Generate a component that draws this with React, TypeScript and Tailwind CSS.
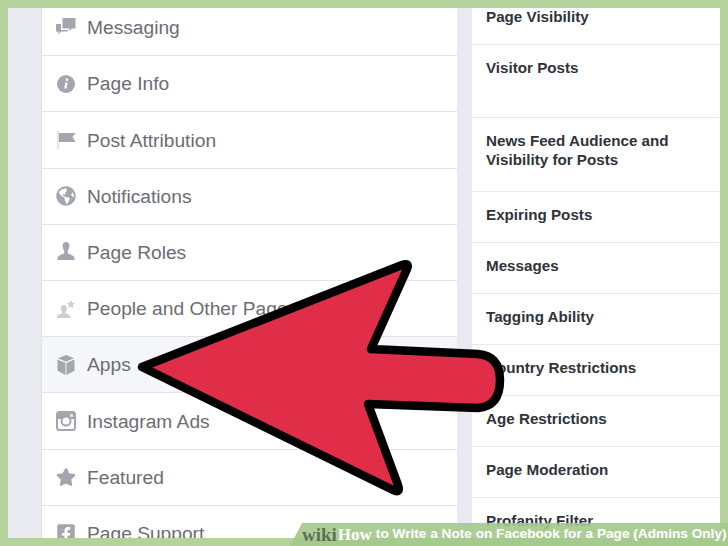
import { FaFacebookSquare, FaGlobeAmericas, FaStar } from "react-icons/fa";
import type { ReactNode } from "react";

const iconClass = "h-5 w-5 text-[#a3a6ae]";

const MessagingIcon = () => (
  <svg viewBox="0 0 20 20" className={iconClass} fill="currentColor">
    <path d="M6.500 0h13v10.500h-3.500l-2.500 2.500v-2.500H6.500z" />
    <path d="M0 6h5v6h7.500l-1 1.500H5l-2.500 3v-3H0z" />
  </svg>
);

const InfoIcon = () => (
  <svg viewBox="0 0 20 20" className={iconClass}>
    <circle cx="10" cy="10" r="9" fill="currentColor" />
    <path d="M9.200 8.500h2.400l-1 6H8.300zM9.800 4.600h2.200v2.200H9.800z" fill="#fff" />
  </svg>
);

const FlagIcon = () => (
  <svg viewBox="0 0 20 20" className={iconClass} fill="currentColor">
    <path d="M1.500 1h1v18h-1z" opacity="0.6" />
    <path d="M3 3h16.500l-3 4 3 5H3z" />
  </svg>
);

const PersonIcon = () => (
  <svg viewBox="0 0 20 20" className={iconClass} fill="currentColor">
    <path d="M10 0c2.400 0 3.600 1.900 3.400 4.300-.2 2-1 3.600-1.600 4.300v2.500c0 1.200 6.700 2 6.700 5V18h-17v-1.900c0-3 6.700-3.800 6.700-5V8.600C7.600 7.900 6.800 6.300 6.600 4.300 6.400 1.900 7.600 0 10 0z" />
  </svg>
);

const PersonStarIcon = () => (
  <svg viewBox="0 0 20 20" className="h-5 w-5 text-[#cdced3]" fill="currentColor">
    <path d="M8 6c2 0 3 1.500 2.800 3.400-.2 1.600-.7 2.800-1.300 3.400v1.100c0 1 5 1.500 5 3.700V19H1v-1.400c0-2.200 5-2.700 5-3.700v-1.100c-.6-.6-1.100-1.800-1.300-3.400C4.500 7.500 6 6 8 6z" />
    <path d="M15 1l1.200 2.800 3 .2-2.300 2 .8 3L15 7.400 12.300 9l.8-3-2.300-2 3-.2z" />
  </svg>
);

const CubeIcon = () => (
  <svg viewBox="0 0 20 20" className={iconClass} fill="currentColor">
    <path d="M10 0l8 3.300L10 6.800 2 3.300z" />
    <path d="M1.500 4.600l8 3.500V20l-8-4.200z" />
    <path d="M18.500 4.600l-8 3.500V20l8-4.200z" />
  </svg>
);

const InstagramIcon = () => (
  <svg viewBox="0 0 20 20" className={iconClass}>
    <rect x="1" y="1" width="18" height="18" rx="2.500" fill="none" stroke="currentColor" strokeWidth="2" />
    <path d="M1 3.500A2.500 2.500 0 0 1 3.500 1h13A2.500 2.500 0 0 1 19 3.500V8H1z" fill="currentColor" />
    <circle cx="10" cy="10" r="4.500" fill="#fff" stroke="currentColor" strokeWidth="2" />
    <rect x="14" y="3" width="3" height="3" fill="#fff" opacity="0.7" />
  </svg>
);

type NavItem = { label: string; icon: ReactNode; active?: boolean };

const navItems: NavItem[] = [
  { label: "Messaging", icon: <MessagingIcon /> },
  { label: "Page Info", icon: <InfoIcon /> },
  { label: "Post Attribution", icon: <FlagIcon /> },
  { label: "Notifications", icon: <FaGlobeAmericas className={iconClass} /> },
  { label: "Page Roles", icon: <PersonIcon /> },
  { label: "People and Other Pages", icon: <PersonStarIcon /> },
  { label: "Apps", icon: <CubeIcon />, active: true },
  { label: "Instagram Ads", icon: <InstagramIcon /> },
  { label: "Featured", icon: <FaStar className={iconClass} /> },
  { label: "Page Support", icon: <FaFacebookSquare className={iconClass} /> },
];

const settings = [
  { label: "Page Visibility", h: "h-[51px]" },
  { label: "Visitor Posts", h: "h-[73px]" },
  { label: "News Feed Audience and Visibility for Posts", h: "h-[74px]" },
  { label: "Expiring Posts", h: "h-[51px]" },
  { label: "Messages", h: "h-[51px]" },
  { label: "Tagging Ability", h: "h-[51px]" },
  { label: "Country Restrictions", h: "h-[51px]" },
  { label: "Age Restrictions", h: "h-[51px]" },
  { label: "Page Moderation", h: "h-[51px]" },
  { label: "Profanity Filter", h: "h-[51px]" },
];

export default function App() {
  return (
    <div className="relative flex h-[546px] w-[728px] overflow-hidden bg-[#b5d19c] p-2 font-['Liberation_Sans',Arial,sans-serif]">
      <div className="flex flex-1 overflow-hidden bg-[#e9eaef] pl-[33px]">
        <div className="-mt-2 w-[416px] shrink-0 border-l border-[#dfe0e4] bg-white">
          {navItems.map((item) => (
            <div
              key={item.label}
              className={`flex h-[56.2px] items-center gap-[11px] border-b border-[#e3e4e8] pl-[14px] text-[19.2px] text-[#6b6d74] ${
                item.active ? "bg-[#f5f6f9]" : ""
              }`}
            >
              <span className="flex w-5 shrink-0 justify-center">{item.icon}</span>
              <span className="whitespace-nowrap pt-[2px]">{item.label}</span>
            </div>
          ))}
        </div>
        <div className="-mt-[14px] ml-[15px] flex-1 bg-white">
          {settings.map((row) => (
            <div
              key={row.label}
              className={`${row.h} border-b border-[#e8e9ec] pl-[14px] pr-10 pt-[13px] text-[15.2px] font-bold leading-[19px] text-[#30333a]`}
            >
              {row.label}
            </div>
          ))}
        </div>
      </div>

      {/* arrow and caption sit on top of the screenshot */}
      <svg viewBox="0 0 728 546" className="absolute left-0 top-0 h-[546px] w-[728px]">
        <path
          d="M142 367 L402 265 Q410 262 407 269 L371 349 L478 354 Q500 356 500 380 Q500 406 478 408 L368 404 L398 485 Q401 494 393 490 Z"
          fill="#e12e48"
          stroke="#000"
          strokeWidth="8.500"
          strokeLinejoin="round"
        />
      </svg>
      <div className="absolute bottom-0 right-0 flex h-[23px] w-[438px] items-center bg-[#a3c98b]/90 pl-[12px] font-bold [clip-path:polygon(12px_0,100%_0,100%_100%,0_100%)]">
        <span className="font-['Liberation_Serif',serif] text-[19px] leading-none text-[#5f6f55]">wiki</span>
        <span className="ml-[1px] mr-[4px] font-['Liberation_Serif',serif] text-[17px] leading-none text-white">How</span>
        <span className="whitespace-nowrap text-[13.650px] text-white">to Write a Note on Facebook for a Page (Admins Only)</span>
      </div>
    </div>
  );
}
